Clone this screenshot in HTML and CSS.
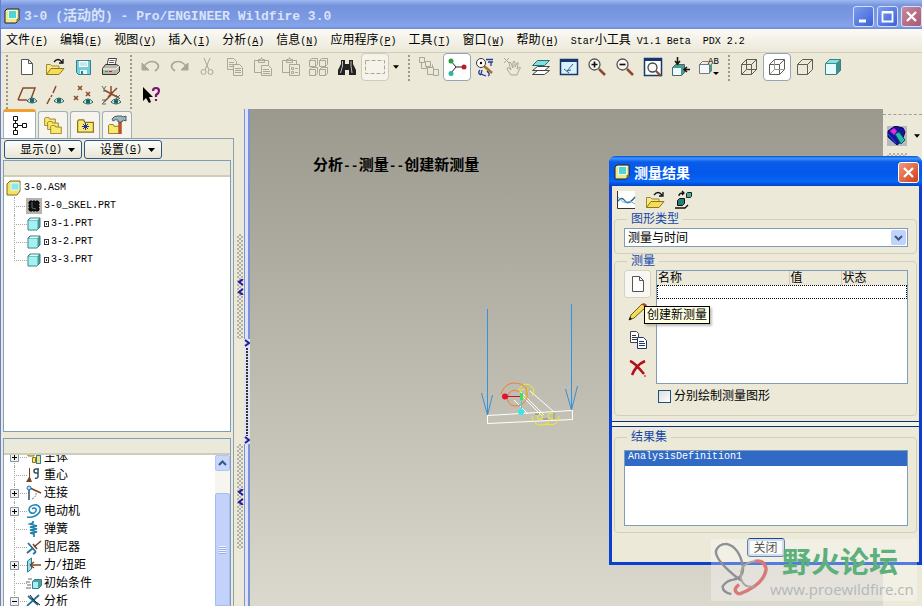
FILE: index.html
```html
<!DOCTYPE html>
<html lang="zh-CN">
<head>
	<meta charset="UTF-8">
	<title>3-0 (活动的) - Pro/ENGINEER Wildfire 3.0</title>
	<link rel="stylesheet" href="styles.css">
</head>
<body>
	<svg class="defs" aria-hidden="true">
		<symbol id="app" viewBox="0 0 16 16">
			<path d="M1 3l2-2h12v11l-3 3H1z" fill="#f3e98a" stroke="#222"/>
			<path d="M4.500 2.500h8v8h-8z" fill="#4fd6cf" stroke="#e9fffc"/>
			<path d="M12.500 14.500v-3l2.500-2v3z" fill="#8a7d20"/>
		</symbol>
		<symbol id="part" viewBox="0 0 16 16">
			<path d="M2 4l2-2h10v9l-3 3H2z" fill="#4a9c9c" stroke="#3d7c80"/>
			<path d="M2.500 4.500h9v9h-9z" fill="#a5f0f0"/>
			<path d="M3 4l1.500-1.500H13L11.500 4z" fill="#d8ffff"/>
		</symbol>
		<symbol id="plus" viewBox="0 0 9 9">
			<path d="M.5.5h8v8h-8z" fill="#f4f2ea" stroke="#8296ab"/>
			<path d="M2 4.500h5M4.500 2v5" stroke="#000"/>
		</symbol>
		<symbol id="minus" viewBox="0 0 9 9">
			<path d="M.5.5h8v8h-8z" fill="#f4f2ea" stroke="#8296ab"/>
			<path d="M2 4.500h5" stroke="#000"/>
		</symbol>
		<symbol id="eye" viewBox="0 0 10 7">
			<path d="M0 4Q5-2 10 4Q5 8 0 4z" fill="#eef8f4" stroke="#256060"/>
			<circle cx="5" cy="3.500" r="2.300" fill="#1b6666"/>
		</symbol>
		<symbol id="page" viewBox="0 0 20 20">
			<path d="M4.500 2.500h7l4 4v11h-11zM11.500 2.500v4h4" fill="#fff" stroke="#555"/>
		</symbol>
		<symbol id="open" viewBox="0 0 20 20">
			<path d="M1.500 17.500V7.500h4l1.500 1.500h7v3" fill="#f6e88c" stroke="#a08a2c"/>
			<path d="M1.500 17.500l4.500-6h13l-5 6z" fill="#f7dc55" stroke="#8d7820"/>
			<path d="M9 5Q13 0 17 5M18 2v4h-4" fill="none" stroke="#111" stroke-width="1.300"/>
		</symbol>
		<symbol id="lens" viewBox="0 0 20 20">
			<circle cx="7.500" cy="7.500" r="5.500" fill="#f8f8f4" stroke="#555" stroke-width="1.300"/>
			<path d="M12 12l6 6" stroke="#8a4a2c" stroke-width="2.500"/>
		</symbol>
		<symbol id="folder" viewBox="0 0 14 11">
			<path d="M.5 10.500v-9l1-1h4l1 2h7v8z" fill="#fbe96e" stroke="#887422"/>
		</symbol>
	</svg>

	<div class="window">
		<header class="titlebar">
			<svg class="icon16"><use href="#app"/></svg>
			<h1>3-0 (<span class="cjk14">活动的</span>) - Pro/ENGINEER Wildfire 3.0</h1>
			<div class="controls">
				<button class="ctl" aria-label="最小化"><svg viewBox="0 0 19 19"><path d="M5 14h7" stroke="#fff" stroke-width="3"/></svg></button>
				<button class="ctl" aria-label="最大化"><svg viewBox="0 0 19 19"><path d="M4.500 5.500h10v9h-10zM4 5h11" fill="none" stroke="#fff" stroke-width="1.800"/></svg></button>
				<button class="ctl ctl-dim" aria-label="关闭窗口"><svg viewBox="0 0 19 19"><path d="M5 5l9 9M14 5l-9 9" stroke="#fff" stroke-width="2.300"/></svg></button>
			</div>
		</header>

		<nav class="menubar">
			<button>文件<span class="en">(<u>F</u>)</span></button>
			<button>编辑<span class="en">(<u>E</u>)</span></button>
			<button>视图<span class="en">(<u>V</u>)</span></button>
			<button>插入<span class="en">(<u>I</u>)</span></button>
			<button>分析<span class="en">(<u>A</u>)</span></button>
			<button>信息<span class="en">(<u>N</u>)</span></button>
			<button>应用程序<span class="en">(<u>P</u>)</span></button>
			<button>工具<span class="en">(<u>T</u>)</span></button>
			<button>窗口<span class="en">(<u>W</u>)</span></button>
			<button>帮助<span class="en">(<u>H</u>)</span></button>
			<button><span class="en">Star</span>小工具<span class="en"> V1.1 Beta</span></button>
			<button><span class="en">PDX 2.2</span></button>
		</nav>

		<div class="toolbar">
			<i class="grip"></i>
			<button aria-label="新建"><svg><use href="#page"/></svg></button>
			<button aria-label="打开"><svg><use href="#open"/></svg></button>
			<button aria-label="保存"><svg viewBox="0 0 20 20"><path d="M3.500 3.500h14v14h-12l-2-2z" fill="#6fd0da" stroke="#2f7f90"/><path d="M6 4h9v6H6z" fill="#fff"/><path d="M7 6h7M7 8h7" stroke="#9cc"/><path d="M7 13h7v4H7z" fill="#e8f6f6"/><path d="M8 14h2v3H8z" fill="#2f7f90"/></svg></button>
			<button aria-label="打印"><svg viewBox="0 0 20 20"><path d="M6 8l1.500-6.500h8L14 8" fill="#fff" stroke="#444"/><path d="M8.500 3.500h5M8 5.500h5" stroke="#666"/><path d="M1.500 11.500l3-4h11l3 2v5l-3 3h-14z" fill="#b9b7ac" stroke="#333"/><path d="M2 12h13l3-3" fill="none" stroke="#fff"/><path d="M4 14.500h3" stroke="#2a2"/><path d="M8 14.500h3" stroke="#c22"/></svg></button>
			<i class="grip"></i>
			<button aria-label="撤消"><svg class="off" viewBox="0 0 20 20"><path d="M3 9Q8 3 14 5Q21 9 14 14" stroke-width="1.700"/><path d="M1 6v7h7z" fill="#a9a797"/></svg></button>
			<button aria-label="重做"><svg class="off" viewBox="0 0 20 20"><path d="M17 9Q12 3 6 5Q-1 9 6 14" stroke-width="1.700"/><path d="M19 6v7h-7z" fill="#a9a797"/></svg></button>
			<button aria-label="剪切"><svg class="off" viewBox="0 0 20 20"><path d="M7 1l5 12M13 1L8 13"/><circle cx="6.500" cy="15" r="2.500"/><circle cx="13.500" cy="15" r="2.500"/></svg></button>
			<button aria-label="复制"><svg class="off" viewBox="0 0 20 20"><path d="M2.500 1.500h6l3 3v8h-9zM4 5.500h5M4 7.500h5M4 9.500h5"/><path d="M8.500 7.500h6l3 3v8h-9z" fill="#ece9d8"/><path d="M10 11.500h6M10 13.500h6M10 15.500h6"/></svg></button>
			<button aria-label="粘贴"><svg class="off" viewBox="0 0 20 20"><path d="M1.500 3.500h14v12h-14zM5.500 5.500v-3h2l1-2 1 2h2v3z"/><path d="M8.500 8.500h7l3 3v7h-10z" fill="#ece9d8"/><path d="M10 12.500h6M10 14.500h7M10 16.500h7"/></svg></button>
			<button aria-label="选择性粘贴"><svg class="off" viewBox="0 0 20 20"><path d="M1.500 3.500h14v12h-14zM5.500 5.500v-3h2l1-2 1 2h2v3z"/><path d="M8.500 7.500h10v11h-10z" fill="#ece9d8"/><path d="M10.500 10.500h2v2h-2zM10.500 14.500h2v2h-2zM14 11.500h3M14 15.500h3"/></svg></button>
			<button aria-label="再生"><svg class="off" viewBox="0 0 20 20"><path d="M.5 3.500l2-2h6v6l-2 2h-6zM10.500 3.500l2-2h6v6l-2 2h-6zM.5 12.500l2-2h6v6l-2 2h-6zM10.500 12.500l2-2h6v6l-2 2h-6zM.5 3.500h6v6M10.500 3.500h6v6M.5 12.500h6v6M10.500 12.500h6v6"/></svg></button>
			<button aria-label="查找"><svg viewBox="0 0 20 20"><path d="M4 3h4v4h4V3h4v4l3 6v5h-7v-5H8v5H1v-5l3-6z" fill="#222"/><path d="M5.500 4v5l-2 7M14 4v5l1 7" stroke="#bbb" fill="none"/></svg></button>
			<button class="framed" aria-label="选取框"><svg class="off" viewBox="0 0 20 20"><path d="M.5 3.500h19v13H.5z" stroke-dasharray="4 2"/></svg></button>
			<button class="drop" aria-label="选取方式"><svg viewBox="0 0 7 4"><path d="M0 0h7L3.500 4z"/></svg></button>
			<i class="grip"></i>
			<button aria-label="连接显示"><svg class="off" viewBox="0 0 20 20"><path d="M.5 .5h5v5h-5zM6.500 4.500h5v5h-5zM2.500 5.500v6h5v-2M8.500 10.500h6v7h-6zM14.500 12.500h5v6h-5zM13.500 10.500v-3"/></svg></button>
			<button class="on" aria-label="旋转中心"><svg viewBox="0 0 20 20"><path d="M4 4l5 6h8M9 10l-5 6" fill="none" stroke="#222"/><circle cx="4" cy="4" r="2.500" fill="#25a33a"/><circle cx="17" cy="10" r="2.500" fill="#b51d2a"/><circle cx="4" cy="16.500" r="2.500" fill="#2cb6a4"/></svg></button>
			<button aria-label="定向模式"><svg viewBox="0 0 20 20"><circle cx="6" cy="6" r="4.500" fill="#fff" stroke="#333"/><circle cx="6" cy="6" r="1.200"/><path d="M9 9l8 7" stroke="#a8742c" stroke-width="2.500"/><path d="M11 2.500h7M13 5h5M16 5v4M5 13q-3 3 1 5M7 13l-1 4 5 2M12 14q4 4 1 5" fill="none" stroke="#223c9c" stroke-width="1.300"/></svg></button>
			<button aria-label="拖动"><svg class="off" viewBox="0 0 20 20"><path d="M1 1l5 5M6 1L1 6M8 18l-4-6q0-2 2-1l2 2-2-7q1-2 2 0l2 5V5q1-2 2 0v5l2-4q2-1 1 1l-1 5 3-2q1 1-1 3l-2 5z"/></svg></button>
			<button aria-label="层"><svg viewBox="0 0 20 20"><path d="M1.500 17.500l5-4h12l-5 4zM1.500 13.500l5-4h12l-5 4z" fill="#fff" stroke="#444"/><path d="M1.500 8.500l5-5h12l-5 5z" fill="#7fe0e0" stroke="#286f72"/></svg></button>
			<button aria-label="重画"><svg viewBox="0 0 20 20"><path d="M1.500 2.500h17v15h-17z" fill="#d9f1fb" stroke="#17386e" stroke-width="1.500"/><path d="M1 2h18v3H1z" fill="#17386e"/><path d="M14 7l-6 7M5 12l5 4M8 14l4-1" stroke="#355f84" fill="none"/></svg></button>
			<button aria-label="放大"><svg viewBox="0 0 20 20"><use href="#lens"/><path d="M4.500 7.500h6M7.500 4.500v6" stroke="#111" stroke-width="1.700"/></svg></button>
			<button aria-label="缩小"><svg viewBox="0 0 20 20"><use href="#lens"/><path d="M4.500 7.500h6" stroke="#111" stroke-width="1.700"/></svg></button>
			<button aria-label="重新调整"><svg viewBox="0 0 20 20"><path d="M1.500 1.500h17v17h-17z" fill="#fff" stroke="#17386e" stroke-width="1.500"/><path d="M1 1h18v3H1z" fill="#17386e"/><circle cx="9.500" cy="10.500" r="4.500" fill="#f8f8f4" stroke="#444" stroke-width="1.300"/><path d="M13 14l5 5" stroke="#8a4a2c" stroke-width="2.200"/></svg></button>
			<button aria-label="重定向"><svg viewBox="0 0 20 20"><path d="M1.500 10.500l3-3h9v8l-3 3h-9z" fill="#4b9a8f" stroke="#467"/><path d="M2 11h8v7H2z" fill="#edfcfa"/><path d="M6.500 0v6M4 4l2.500 3L9 4M19 12.500h-5M16 10l-3 2.500 3 2.500" fill="none" stroke="#111" stroke-width="1.500"/></svg></button>
			<button aria-label="视图列表"><svg viewBox="0 0 20 20"><path d="M.5 7.500l3-3h6M.5 7.500h10v9H.5z" fill="#f2fbfa" stroke="#778"/><path d="M11 8l2-2v8l-2 2z" fill="#4b9a8f"/><text x="9" y="7" class="ab">AB</text><path d="M14 15h6l-3 3z"/></svg></button>
			<i class="grip"></i>
			<button aria-label="线框"><svg class="wire" viewBox="0 0 20 20"><path d="M2.500 7.500h10v10h-10zM7.500 2.500h10v10h-10zM2.500 7.500l5-5M12.500 7.500l5-5M2.500 17.500l5-5M12.500 17.500l5-5"/></svg></button>
			<button class="on" aria-label="隐藏线"><svg class="wire" viewBox="0 0 20 20"><path d="M2.500 7.500h10v10h-10zM2.500 7.500l5-5h10v10l-5 5M12.500 7.500l5-5"/><path d="M7.500 3v9.500h10M2.500 17.500l5-5" stroke="#999"/></svg></button>
			<button aria-label="无隐藏线"><svg class="wire" viewBox="0 0 20 20"><path d="M2.500 7.500h10v10h-10zM2.500 7.500l5-5h10v10l-5 5M12.500 7.500l5-5"/></svg></button>
			<button aria-label="着色"><svg viewBox="0 0 20 20"><path d="M2.500 6.500l4-4h11v11l-4 4h-11z" fill="#3f8f92" stroke="#3d8084"/><path d="M3 7h10v10H3z" fill="#e2fdfc"/><path d="M3.500 6l3-3h10l-3 3z" fill="#86e3e3"/></svg></button>
		</div>
		<div class="toolbar">
			<i class="grip"></i>
			<button aria-label="基准平面"><svg viewBox="0 0 20 20"><path d="M1 15l5-12h12l-4 11M1 15h9" fill="none" stroke="#8a4a2c" stroke-width="1.500"/><use href="#eye" x="10" y="12" width="10" height="7"/></svg></button>
			<button aria-label="基准轴"><svg viewBox="0 0 20 20"><path d="M11 1L8 8M7 10l-1 2M5 13l-3 6" fill="none" stroke="#8a4a2c" stroke-width="1.500"/><use href="#eye" x="9" y="12" width="10" height="7"/></svg></button>
			<button aria-label="基准点"><svg viewBox="0 0 20 20"><path d="M5 1l4 4M9 1L5 5M13 7l4 4M17 7l-4 4M1 11l4 4M5 11l-4 4" stroke="#8a4a2c" stroke-width="1.500"/><use href="#eye" x="10" y="13" width="10" height="7"/></svg></button>
			<button aria-label="坐标系"><svg viewBox="0 0 20 20"><path d="M3 5l15 8M10 1v9L3 17M16 3l-9 9" fill="none" stroke="#8a4a2c" stroke-width="1.500"/><path d="M1 1l2 3 2-3M3 4v3M15 10l4 4M19 10l-4 4M1 15h4l-4 4h4" fill="none" stroke="#666"/><use href="#eye" x="10" y="13" width="10" height="7"/></svg></button>
			<i class="grip"></i>
			<button aria-label="上下文帮助"><svg viewBox="0 0 20 20"><path d="M2 2v14l3-3 3 5 2-1-2-5h4z"/><path d="M12 6q0-3 3-3t3 3q0 2-3 4v2M15 14v2" fill="none" stroke="#7b1274" stroke-width="2.200"/></svg></button>
		</div>

		<main class="work">
			<aside class="navigator">
				<div class="tabs">
					<button class="tab active" aria-label="模型树"><svg viewBox="0 0 20 20"><path d="M3.500 1.500h4v4h-4zM3.500 8.500h4v4h-4zM12.500 8.500h4v4h-4zM3.500 15.500h4v4h-4zM5.500 6v2M5.500 13v2M8 10.500h4" fill="#fff" stroke="#111"/></svg></button>
					<button class="tab" aria-label="文件夹浏览器"><svg viewBox="0 0 20 20"><use href="#folder" x="1" y="2" width="12" height="9"/><use href="#folder" x="4" y="6" width="12" height="9"/><use href="#folder" x="7" y="10" width="12" height="9"/></svg></button>
					<button class="tab" aria-label="收藏夹"><svg viewBox="0 0 20 20"><use href="#folder" x="2" y="4" width="17" height="14"/><path d="M10.500 8v7M7 11.500h7M8 9l5 5M13 9l-5 5" stroke="#1c2f9c"/></svg></button>
					<button class="tab" aria-label="工具"><svg viewBox="0 0 20 20"><use href="#folder" x="1" y="9" width="13" height="10"/><path d="M13 7v12" stroke="#b8542a" stroke-width="3.500"/><path d="M5 4q2-3 5-3h5l1 1 3-1v5l-3-1-1 2h-4V5q-3-1-5 1z" fill="#9fb6bd" stroke="#4a5e66"/></svg></button>
				</div>
				<div class="panel">
					<div class="panel-btns">
						<button>显示<span class="en">(<u>O</u>)</span><svg viewBox="0 0 7 4"><path d="M0 0h7L3.500 4z"/></svg></button>
						<button>设置<span class="en">(<u>G</u>)</span><svg viewBox="0 0 7 4"><path d="M0 0h7L3.500 4z"/></svg></button>
					</div>
					<section class="box box-model">
						<div class="box-head"></div>
						<ul class="model">
							<li class="root"><svg class="icon16" viewBox="0 0 16 16"><path d="M1 4l3-3h10v10l-3 4H1z" fill="#f5e262" stroke="#7d6d20"/><path d="M5 3h8v7H5z" fill="#8ee8ea" stroke="#d9ffff"/></svg>3-0.ASM</li>
							<li><svg class="icon16" viewBox="0 0 16 16"><path d="M0 0h16v16H0z" fill="#b5b3ae"/><path d="M3 3h10v10H3z" fill="#111"/><path d="M2 5h2M2 8h2M2 11h2M12 5h2M12 8h2M12 11h2M5 2v2M8 2v2M11 2v2M5 12v2M8 12v2M11 12v2" stroke="#000"/><path d="M6 4v6l4 1" fill="none" stroke="#666"/></svg>3-0_SKEL.PRT</li>
							<li><svg class="icon16"><use href="#part"/></svg><i class="mark"></i>3-1.PRT</li>
							<li><svg class="icon16"><use href="#part"/></svg><i class="mark"></i>3-2.PRT</li>
							<li><svg class="icon16"><use href="#part"/></svg><i class="mark"></i>3-3.PRT</li>
						</ul>
					</section>
					<section class="box box-mech">
						<div class="box-head"></div>
						<div class="scroller">
							<ul class="mech">
								<li><svg class="exp"><use href="#plus"/></svg><svg class="icon16" viewBox="0 0 16 16"><path d="M0 5h5M2 3h6v4H2zM6.500 8.500h3v5h-3zM10.500 6.500h4v8h-4z" fill="#f9e27a" stroke="#8a7420"/><path d="M10.500 6.500h4v8h-4z" fill="none" stroke="#2c7f9c"/></svg>主体</li>
								<li><i class="exp"></i><svg class="icon16" viewBox="0 0 16 16"><path d="M3 1h1v9l2 5H0l3-5z" fill="#7a4526"/><path d="M13 2h-3q-2 0-2 2t2 2h2V2v8q-1 2-3 1" fill="none" stroke="#33505c" stroke-width="1.500"/></svg>重心</li>
								<li><svg class="exp"><use href="#plus"/></svg><svg class="icon16" viewBox="0 0 16 16"><path d="M3 4v11" stroke="#264c6c" stroke-width="1.500"/><path d="M4 3l11 5" stroke="#7a4526" stroke-width="1.500"/><path d="M6 14q5-2 4-8" fill="none" stroke="#777" stroke-dasharray="2 1"/><circle cx="3" cy="3" r="2" fill="#bfe4ff" stroke="#2173b8"/></svg>连接</li>
								<li><svg class="exp"><use href="#plus"/></svg><svg class="icon16" viewBox="0 0 16 16"><path d="M1 14q4 1 8-1 6-3 5-8-2-4-6-3-5 1-5 5 1 4 5 3 3-2 2-4-2-2-4 0" fill="none" stroke="#1f86b8" stroke-width="1.500"/></svg>电动机</li>
								<li><i class="exp"></i><svg class="icon16" viewBox="0 0 16 16"><path d="M7 0v2l-3 1 7 2-7 1 7 2-7 1 7 2-7 1 4 1v3" fill="none" stroke="#1f7fae" stroke-width="1.700"/></svg>弹簧</li>
								<li><i class="exp"></i><svg class="icon16" viewBox="0 0 16 16"><path d="M2 4l8 9M1 14l6-5M10 13l-3 2" fill="none" stroke="#256f94" stroke-width="1.800"/><path d="M8 8l7-6M7 5l4 5" stroke="#7a4526" stroke-width="1.500"/></svg>阻尼器</li>
								<li><svg class="exp"><use href="#plus"/></svg><svg class="icon16" viewBox="0 0 16 16"><path d="M1.500 4l4-3v11l-4 3z" fill="#9adfee" stroke="#1f7f98"/><path d="M4 8h11M4 8l4-3M4 8l4 3" stroke="#7a4526" stroke-width="1.500"/></svg>力<span class="en">/</span>扭距</li>
								<li><i class="exp"></i><svg class="icon16" viewBox="0 0 16 16"><path d="M2 4h4M0 7h4M1 10h4M0 13h5" stroke="#666"/><path d="M6.500 6.500l2-2h7v6l-3 3h-6z" fill="#4aa2a8" stroke="#357f86"/><path d="M7 7h5v6H7z" fill="#a9eef0"/></svg>初始条件</li>
								<li><svg class="exp"><use href="#minus"/></svg><svg class="icon16" viewBox="0 0 16 16"><path d="M2 3l10 9M1 13L13 2" stroke="#1f6f9c" stroke-width="1.700"/><path d="M4 2q3 6 10 10" fill="none" stroke="#111"/></svg>分析</li>
							</ul>
							<div class="vbar">
								<button aria-label="向上滚动"><svg viewBox="0 0 9 6"><path d="M1 5l3.500-3.500L8 5" fill="none" stroke="#3c557f" stroke-width="2"/></svg></button>
								<div class="thumb"><i></i></div>
							</div>
						</div>
					</section>
				</div>
			</aside>

			<div class="splitter">
				<div class="track">
					<i class="s-top"></i>
					<i class="s-grip hatch"><svg viewBox="0 0 7 16"><path d="M6 0L2 3l4 3M6 10l-4 3 4 3"/></svg></i>
					<i class="s-grip"></i>
					<i class="s-grip hatch"><svg viewBox="0 0 7 16"><path d="M6 0L2 3l4 3M6 10l-4 3 4 3"/></svg></i>
					<i class="s-end"></i>
				</div>
				<div class="track rails">
					<i class="s-top"></i>
					<i class="s-grip"></i>
					<i class="s-grip dots"><svg viewBox="0 0 6 8"><path d="M1 1l4 3-4 3"/></svg><svg viewBox="0 0 6 8"><path d="M1 1l4 3-4 3"/></svg></i>
					<i class="s-grip"></i>
					<i class="s-end"></i>
				</div>
			</div>

			<div class="canvas">
				<p class="caption">分析<b>--</b>测量<b>--</b>创建新测量</p>
				<svg class="mechanism" viewBox="0 0 120 150">
					<g fill="none" stroke="#3c90cc">
						<path d="M17.500 19v106M101.500 14v106" stroke="#3094e0"/>
						<path d="M11.500 103l6 22 5-20M95.500 99l6 21 6-24"/>
					</g>
					<path d="M17.500 125.500l85-5v9l-85 4z" fill="none" stroke="#fff"/>
					<path d="M44 110l14 14M50 101l24 24M60 101l23 20M50 104l22 22" stroke="#fff" fill="none"/>
					<g fill="none" stroke="#f0ee20">
						<path d="M48 100q8-10 14-3q4 4 0 9"/>
						<circle cx="54" cy="103" r="4"/>
						<path d="M62 126q1 9 9 9 7 0 9-5M75 134q11 3 13-4 2-3 0-4"/>
						<circle cx="70" cy="127" r="2.500"/><circle cx="81" cy="126" r="3"/>
					</g>
					<path d="M65 124h4M73 129h5M84 123v6" stroke="#888"/>
					<path d="M31 104q4-12 15-11 13 1 11 15-5 11-16 7-6-5-2-12 5-5 10-1" fill="none" stroke="#f08028"/>
					<path d="M35 106.500h16" stroke="#c81428"/>
					<circle cx="35" cy="106.500" r="3" fill="#e0142c"/>
					<path d="M51.500 107v14" stroke="#2cdccc"/>
					<circle cx="51" cy="122" r="3" fill="#38e6e6"/>
					<path d="M50 103h3v7h-3z" fill="#3ce068"/>
				</svg>
			</div>

			<aside class="sidebar">
				<button aria-label="机构工具"><svg viewBox="0 0 20 20"><path d="M0 0h20v20H0z" fill="#b9b9bf"/><path d="M1 5l7-5 8 2 2 4-3 9-5 4L1 11z" fill="#14149c" stroke="#080850"/><path d="M3 5l4-3 3 3-3 4z" fill="#e22ce2"/><path d="M8 8l4-2 6 8-4 4z" fill="#2cb8b8" stroke="#064"/><path d="M1 8l8 9" stroke="#2c54f0"/></svg></button>
				<button class="drop" aria-label="更多工具"><svg viewBox="0 0 7 4"><path d="M0 0h7L3.500 4z"/></svg></button>
				<i class="next-tool"></i>
			</aside>
		</main>

		<section class="dialog" role="dialog" aria-labelledby="dlg-title">
			<header class="dlg-title">
				<svg class="icon16"><use href="#app"/></svg>
				<h2 id="dlg-title">测量结果</h2>
				<button class="ctl ctl-close" aria-label="关闭对话框"><svg viewBox="0 0 19 19"><path d="M5 5l9 9M14 5l-9 9" stroke="#fff" stroke-width="2.300"/></svg></button>
			</header>
			<div class="dlg-tools">
				<button aria-label="绘制图形"><svg viewBox="0 0 20 20"><path d="M1 1h18v17H1z" fill="#fff"/><path d="M1.500 1v17.500H19" fill="none" stroke="#333"/><path d="M2 11q4-5 7 0t10-4" fill="none" stroke="#2d5d9c" stroke-width="1.300"/><path d="M2 7q5 7 9 5t8 2" fill="none" stroke="#5cb6c0"/></svg></button>
				<button aria-label="装载结果"><svg><use href="#open"/></svg></button>
				<button aria-label="保存结果"><svg viewBox="0 0 20 20"><path d="M3.500 10.500l2-2h5v5l-2 2h-5z" fill="#1f7f72" stroke="#111"/><path d="M12.500 3.500l1-1h4v4l-1 1h-4z" fill="#49ad9c" stroke="#222"/><path d="M5 6q0-3 4-3M8 1l2 2-2 2M1 18h10l3-3" fill="none" stroke="#111" stroke-width="1.300"/></svg></button>
			</div>
			<fieldset class="g-type">
				<legend>图形类型</legend>
				<div class="combo">
					<select aria-label="图形类型">
						<option>测量与时间</option>
					</select>
					<svg viewBox="0 0 15 15"><rect width="15" height="15" rx="2" fill="#c2d3fb"/><path d="M4 6l3.500 3.500L11 6" fill="none" stroke="#3c557f" stroke-width="2"/></svg>
				</div>
			</fieldset>
			<fieldset class="g-measure">
				<legend>测量</legend>
				<div class="measure">
					<div class="side-btns">
						<button class="hover" aria-label="创建新测量"><svg><use href="#page"/></svg></button>
						<button aria-label="编辑测量"><svg viewBox="0 0 20 20"><path d="M1 18l2-5L14 2l4 3L6 16z" fill="#f3dc5c" stroke="#6d5c14"/><path d="M14 2l2-1 3 2-1 2z" fill="#b8342c"/><path d="M1 18l3-1-2-2z"/></svg></button>
						<button aria-label="复制测量"><svg viewBox="0 0 20 20"><path d="M2.500 1.500h6l2 2v9h-8z" fill="#fff" stroke="#444"/><path d="M4 5.500h4M4 7.500h5M4 9.500h5" stroke="#333"/><path d="M9.500 7.500h6l3 3v8h-9z" fill="#fff" stroke="#1d3570"/><path d="M11 11.500h5M11 13.500h6M11 15.500h6" stroke="#1d3570"/></svg></button>
						<button aria-label="删除测量"><svg viewBox="0 0 20 20"><path d="M2 3q4 1 14 13M17 3Q8 7 4 17" fill="none" stroke="#b01018" stroke-width="2.500"/><path d="M17 17v2" stroke="#b01018"/></svg></button>
						<span class="tip" role="tooltip">创建新测量</span>
					</div>
					<div class="measure-main">
						<div class="grid">
							<table>
								<thead>
									<tr><th class="c-name">名称</th><th class="c-value">值</th><th>状态</th></tr>
								</thead>
								<tbody>
									<tr><td colspan="3"></td></tr>
								</tbody>
							</table>
						</div>
						<label class="check"><input type="checkbox">分别绘制测量图形</label>
					</div>
				</div>
			</fieldset>
			<div class="sash"></div>
			<fieldset class="g-result">
				<legend>结果集</legend>
				<select class="list" size="4" aria-label="结果集">
					<option class="sel">AnalysisDefinition1</option>
				</select>
			</fieldset>
			<div class="dlg-foot"><button>关闭</button></div>
		</section>

		<div class="watermark">
			<svg viewBox="0 0 60 58">
				<path d="M30 40Q4 20 4 10Q6 2 15 2Q28 5 32 25Q33 37 22 39Q15 40 11 46Q11 52 20 54" fill="none" stroke="#8d9196" stroke-width="2.500"/>
				<path d="M28 54Q54 44 56 28Q54 18 44 20M28 54Q20 50 28 44" fill="none" stroke="#d87a7a" stroke-width="3.500"/>
				<path d="M44 20Q28 22 30 38Q33 48 44 46" fill="none" stroke="#a9a4a4" stroke-width="2"/>
			</svg>
			<div>
				<strong>野火论坛</strong>
				<span>www.proewildfire.cn</span>
			</div>
		</div>
	</div>
</body>
</html>
```
FILE: styles.css
```css
* {
	box-sizing: border-box;
}
body {
	margin: 0;
	font-family: "Liberation Sans", "Noto Sans CJK SC", sans-serif;
	font-size: 12px;
	line-height: 14px;
	color: #000;
}
button {
	margin: 0;
	padding: 0;
	border: 0;
	background: none;
	font: inherit;
	color: inherit;
}
svg {
	display: block;
	flex: none;
}
ul {
	margin: 0;
	padding: 0;
	list-style: none;
}
.defs {
	position: absolute;
	width: 0;
	height: 0;
}
.en, .model, .list {
	font-family: "Liberation Mono", monospace;
	font-size: 10px;
}
.en {
	white-space: pre;
}
.icon16 {
	width: 16px;
	height: 16px;
}
.window {
	position: relative;
	display: flex;
	flex-direction: column;
	height: 100vh;
	overflow: hidden;
	background: #ece9d8;
	border-left: 1px solid #6880c8;
}

/* title bar */
.titlebar {
	display: flex;
	align-items: center;
	height: 29px;
	padding: 3px 0 0 3px;
	gap: 4px;
	background: linear-gradient(#9db9f0, #7592dc 20%, #7b98e2 60%, #86a5ec 90%, #7088d0);
}
.titlebar h1 {
	flex: 1;
	margin: 0;
	font: bold 13px/16px "Liberation Mono", "Noto Sans CJK SC", monospace;
	color: #d8e4f8;
}
.cjk14 {
	font-size: 14px;
}
.controls {
	display: flex;
	gap: 3px;
}
.ctl {
	width: 21px;
	height: 21px;
	border: 1px solid #d5e0fa;
	border-radius: 3px;
	background: linear-gradient(135deg, #7a9cf0, #3c62d4);
}
.ctl-dim {
	background: linear-gradient(135deg, #c68a9c, #a85870);
}
.ctl-close {
	border-color: #fff;
	background: linear-gradient(135deg, #f09a80, #d23c14);
}

/* menu */
.menubar {
	display: flex;
	align-items: center;
	gap: 12px;
	height: 24px;
	padding: 0 5px;
	background: linear-gradient(#fbfaf6, #ece9d8);
	border-bottom: 1px solid #d0cdbc;
	white-space: nowrap;
}

/* toolbars */
.toolbar {
	display: flex;
	height: 28px;
}
.toolbar button {
	display: flex;
	align-items: center;
	justify-content: center;
	width: 28px;
}
.toolbar button svg {
	width: 20px;
	height: 20px;
}
.toolbar .grip {
	width: 12px;
	background: radial-gradient(circle at 1px 1px, #9a988a 1px, transparent 1px) 5px 2px / 12px 4px;
}
.toolbar .on, .toolbar .framed {
	border: 1px solid #94a6b8;
	border-radius: 4px;
	background: #fff;
}
.toolbar .framed {
	border-color: #cfccba;
	background: #f5f3ea;
}
.toolbar .drop {
	width: 14px;
}
.toolbar .drop svg, .sidebar .drop svg {
	width: 6px;
	height: 4px;
}
.off {
	fill: none;
	stroke: #a9a797;
}
.wire {
	fill: none;
	stroke: #5f5d54;
}
.ab {
	font: 9px "Liberation Mono", monospace;
}

/* work area */
.work {
	flex: 1;
	display: flex;
	min-height: 0;
}
.navigator {
	display: flex;
	flex-direction: column;
	width: 233px;
}
.tabs {
	display: flex;
	align-items: flex-end;
	gap: 2px;
	height: 29px;
	padding-left: 2px;
}
.tab {
	display: flex;
	align-items: center;
	justify-content: center;
	width: 30px;
	height: 27px;
	border: 1px solid #9eb0bc;
	border-bottom: 0;
	border-radius: 3px 3px 0 0;
	background: #f6f4ec;
}
.tab svg {
	width: 20px;
	height: 20px;
}
.tab.active {
	width: 33px;
	height: 29px;
	border-top: 3px solid #f0a030;
	background: #fff;
}
.panel {
	flex: 1;
	display: flex;
	flex-direction: column;
	min-height: 0;
	padding: 1px 2px 0;
	border: 1px solid #8ba0b4;
	border-width: 1px 1px 0 0;
}
.panel-btns {
	display: flex;
	gap: 2px;
	padding: 0 1px 1px;
}
.panel-btns button {
	display: flex;
	align-items: center;
	justify-content: flex-end;
	width: 78px;
	height: 19px;
	padding-right: 6px;
	border: 1px solid #2c5680;
	border-radius: 3px;
	background: linear-gradient(#fdfdfa, #e8e5d6);
}
.panel-btns svg {
	width: 7px;
	height: 4px;
	margin-left: 6px;
}
.box {
	display: flex;
	flex-direction: column;
	min-height: 0;
	border: 1px solid #7f9db9;
	background: #fff;
}
.box-model {
	flex: 272;
	margin-bottom: 6px;
}
.box-mech {
	flex: 168;
	border-bottom: 0;
}
.box-head {
	height: 16px;
	flex: none;
	background: #ebe9da;
	border-bottom: 2px solid #cfccbb;
}
.model {
	padding-top: 2px;
}
.model li {
	position: relative;
	display: flex;
	align-items: center;
	gap: 2px;
	height: 18px;
	padding-left: 22px;
}
.model .root {
	padding-left: 2px;
}
.model li:not(.root)::before, .mech li::before {
	content: "";
	position: absolute;
	left: 10px;
	top: 0;
	width: 12px;
	height: 9px;
	border: 1px dotted #a8a6a0;
	border-width: 0 0 1px 1px;
}
.model li:not(.root):not(:last-child)::after, .mech li::after {
	content: "";
	position: absolute;
	left: 10px;
	top: 9px;
	height: 9px;
	border-left: 1px dotted #a8a6a0;
}
.mark {
	width: 5px;
	height: 6px;
	border: 1px solid #333;
	background: radial-gradient(#333 1px, #fff 1px);
}
.scroller {
	flex: 1;
	display: flex;
	min-height: 0;
	overflow: hidden;
}
.mech {
	flex: 1;
	margin-top: -7px;
}
.mech li {
	position: relative;
	display: flex;
	align-items: center;
	height: 18px;
	padding-left: 6px;
}
.mech .exp {
	position: relative;
	z-index: 1;
	width: 9px;
	height: 9px;
	margin-right: 7px;
}
.mech .icon16 {
	margin-right: 2px;
}
.vbar {
	display: flex;
	flex-direction: column;
	width: 15px;
	background: #f6f5f0;
}
.vbar button {
	display: flex;
	align-items: center;
	justify-content: center;
	height: 16px;
	border: 1px solid #b4c6f0;
	border-radius: 2px;
	background: #c6d6fc;
}
.vbar button svg {
	width: 9px;
	height: 6px;
}
.thumb {
	flex: 1;
	display: flex;
	align-items: center;
	justify-content: center;
	margin-top: 22px;
	border: 1px solid #a8bcf0;
	border-radius: 2px 2px 0 0;
	background: #c3d2fa;
}
.thumb i {
	width: 7px;
	height: 8px;
	background: repeating-linear-gradient(#f0f5ff 0 1px, #9cb0e4 1px 2px);
}

/* splitter */
.splitter {
	display: flex;
	width: 16px;
}
.track {
	display: flex;
	flex-direction: column;
	width: 10px;
	padding-left: 3px;
}
.track i {
	display: flex;
	flex-direction: column;
	justify-content: center;
}
.track svg {
	width: 7px;
	fill: none;
	stroke: #1c1c9c;
	stroke-width: 2px;
}
.s-top {
	flex: 125;
}
.s-grip {
	flex: 105;
}
.s-end {
	flex: 57;
}
.hatch, .next-tool {
	width: 6px;
	background: repeating-conic-gradient(#b4b2a6 0 25%, #ece9d8 0 50%) 0 0 / 4px 4px;
}
.rails {
	width: 6px;
	padding: 0;
}
.rails i {
	border: 1px solid #7c92d8;
	border-width: 0 2px 0 1px;
	background: #dfe4f4;
}
.rails .dots {
	justify-content: space-between;
	border: 0;
	background: radial-gradient(circle at 1px 1px, #333 1px, #dfe4f4 1px) 2px 0 / 6px 3px;
}
.rails svg {
	width: 6px;
	height: 8px;
	background: #dfe4f4;
}

/* graphics area */
.canvas {
	position: relative;
	flex: 1;
	background: linear-gradient(#9b998e, #dbd8ce);
}
.caption {
	margin: 46px 0 0 63px;
	font: bold 15px/17px "Noto Sans CJK SC", sans-serif;
}
.caption b {
	font: bold 13px "Liberation Mono", monospace;
}
.mechanism {
	position: absolute;
	left: 220px;
	top: 181px;
	width: 120px;
	height: 150px;
}
.sidebar {
	display: flex;
	flex-wrap: wrap;
	align-items: flex-start;
	align-content: flex-start;
	width: 39px;
	padding: 11px 0 0 4px;
	gap: 7px;
	margin-top: 5px;
	border-top: 1px dashed #a19f92;
}
.sidebar svg, .next-tool {
	width: 20px;
	height: 20px;
}
.sidebar .drop {
	padding-top: 8px;
}

/* dialog */
.dialog {
	position: absolute;
	right: 0;
	top: 156px;
	width: 313px;
	border: 3px solid #0a3fd0;
	border-top: 0;
	border-radius: 7px 7px 0 0;
	background: #ece9d8;
}
.dlg-title {
	display: flex;
	align-items: center;
	gap: 4px;
	height: 30px;
	margin: 0 -3px;
	padding: 2px 3px 0 5px;
	border-radius: 7px 7px 0 0;
	background: linear-gradient(#0a50d8, #3c94ff 8%, #0a5ce8 20%, #0458ea 60%, #0666f8 85%, #0442c0);
}
.dlg-title h2 {
	flex: 1;
	margin: 0;
	font: bold 14px/18px "Noto Sans CJK SC", sans-serif;
	color: #fff;
}
.dlg-tools {
	display: flex;
	gap: 9px;
	height: 26px;
	padding: 4px;
}
.dlg-tools svg, .side-btns svg {
	width: 20px;
	height: 20px;
}
.dlg-tools button {
	height: 20px;
}
fieldset {
	min-width: 0;
	margin: 0 2px;
	padding: 2px 8px 6px 9px;
	border: 1px solid #d0cfbd;
	border-radius: 4px;
}
legend {
	margin-left: 3px;
	padding: 0 4px;
	color: #1446a8;
}
.combo {
	position: relative;
}
.combo select {
	display: block;
	width: 100%;
	height: 19px;
	padding: 0 3px;
	appearance: none;
	border: 1px solid #7f9db9;
	border-radius: 0;
	background: #fff;
	font: inherit;
	color: #000;
}
.combo svg {
	position: absolute;
	right: 2px;
	top: 2px;
	width: 15px;
	height: 15px;
	pointer-events: none;
}
.measure {
	display: flex;
	gap: 5px;
}
.side-btns {
	position: relative;
	width: 27px;
}
.side-btns button {
	display: flex;
	align-items: center;
	justify-content: center;
	width: 27px;
	height: 28px;
}
.side-btns .hover {
	border: 1px solid #d4d2c4;
	border-radius: 3px;
	background: #f8f7f2;
}
.tip {
	position: absolute;
	left: 20px;
	top: 36px;
	padding: 1px 2px;
	border: 1px solid #000;
	background: #ffffe1;
	box-shadow: 2px 2px 2px #8888;
	white-space: nowrap;
}
.measure-main {
	flex: 1;
}
.grid {
	height: 114px;
	border: 1px solid #7f9db9;
	background: #fff;
}
.grid table {
	width: 100%;
	border-collapse: collapse;
	table-layout: fixed;
}
.grid th {
	height: 14px;
	padding: 0 1px;
	background: #ece9d8;
	font-weight: normal;
	text-align: left;
}
.grid th + th {
	border-left: 1px solid #d0cdbc;
}
.grid .c-name {
	width: 132px;
}
.grid .c-value {
	width: 52px;
}
.grid td {
	height: 14px;
	padding: 0;
	outline: 1px dotted #000;
	outline-offset: -1px;
}
.check {
	display: flex;
	align-items: center;
	gap: 3px;
	padding: 5px 0 6px 2px;
}
.check input {
	width: 13px;
	height: 13px;
	margin: 0;
	appearance: none;
	border: 1px solid #1c5180;
	background: linear-gradient(135deg, #dcdcd7, #fff);
}
.sash {
	height: 6px;
	margin: 5px 0 3px;
	border: 1px solid #0c3078;
	border-width: 1px 0;
	background: #f4f3ea;
}
.g-result {
	padding-top: 6px;
}
.list {
	display: block;
	width: 100%;
	height: 76px;
	padding: 0;
	border: 1px solid #7f9db9;
	border-radius: 0;
	background: #fff;
	overflow: hidden;
}
.list option {
	height: 15px;
	min-height: 15px;
	padding: 0 3px;
	line-height: 15px;
}
.list .sel {
	background: #316ac5;
	color: #fff;
}
.dlg-foot {
	display: flex;
	justify-content: center;
	padding: 5px 0;
}
.dlg-foot button {
	width: 38px;
	height: 19px;
	border: 1px solid #1c4a80;
	border-radius: 3px;
	background: #f8f8f6;
	box-shadow: inset 0 0 0 2px #b8ccf0;
}

/* forum mark */
.watermark {
	position: absolute;
	right: 5px;
	bottom: 5px;
	display: flex;
	align-items: center;
	width: 206px;
	height: 62px;
	padding-left: 1px;
	background: #ffffff50;
	pointer-events: none;
}
.watermark svg {
	width: 58px;
	height: 58px;
}
.watermark strong {
	display: block;
	padding-left: 12px;
	font: bold 29px/38px "Noto Sans CJK SC", sans-serif;
	color: #5cb07c;
}
.watermark span {
	display: block;
	font: 15px/20px "Open Sans", sans-serif;
	color: #b4b8b8;
}
```
